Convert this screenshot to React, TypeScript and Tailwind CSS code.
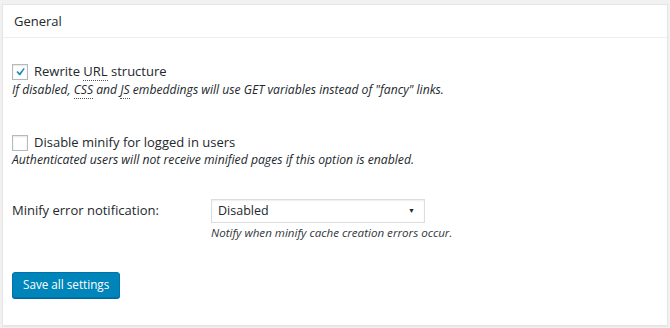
import React from "react";

export default function App() {
  return (
    <div className="w-[670px] h-[328px] bg-[#f1f1f1] pt-[4px] px-[2px] font-['Open_Sans',sans-serif] text-[#23282d]">
      <div className="w-[666px] h-[322px] bg-white border border-[#e5e5e5] shadow-[0_1px_1px_rgba(0,0,0,0.04)]">
        <div className="h-[33px] border-b border-[#eeeeee] pl-[11px] flex items-center text-[13px] leading-none">
          General
        </div>
        <div className="pl-[9px] pt-[25px]">
          <div className="flex items-center h-[18px]">
            <div className="w-[16px] h-[16px] border border-[#b4b9be] bg-white shadow-[inset_0_1px_2px_rgba(0,0,0,0.1)] flex items-center justify-center">
              <svg width="16" height="16" viewBox="0 0 20 20">
                <path d="M15.2 4.4l1.6 1.1-6.3 9.2H8.8L4.9 10.1l1.6-1.4 3 2.9z" fill="#1e8cbe" />
              </svg>
            </div>
            <span className="ml-[6px] text-[13px]">
              Rewrite <span className="border-b border-dotted border-[#555]">URL</span> structure
            </span>
          </div>
          <div className="italic text-[12.15px] h-[16px] leading-[16px] mt-[1px]">
            If disabled, <span className="border-b border-dotted border-[#555]">CSS</span> and{" "}
            <span className="border-b border-dotted border-[#555]">JS</span> embeddings will use GET variables instead of "fancy" links.
          </div>

          <div className="flex items-center h-[18px] mt-[36px]">
            <div className="w-[16px] h-[16px] border border-[#b4b9be] bg-white shadow-[inset_0_1px_2px_rgba(0,0,0,0.1)]" />
            <span className="ml-[6px] text-[13px]">Disable minify for logged in users</span>
          </div>
          <div className="italic text-[12.2px] h-[16px] leading-[16px]">
            Authenticated users will not receive minified pages if this option is enabled.
          </div>

          <div className="flex mt-[31px]">
            <div className="w-[199px] h-[24px] flex items-center text-[13px]">Minify error notification:</div>
            <div>
              <div className="w-[214px] h-[24px] border border-[#dddddd] shadow-[inset_0_1px_2px_rgba(0,0,0,0.07)] flex items-center justify-between pl-[6px] pr-[9px] text-[12.5px]">
                <span>Disabled</span>
                <span className="text-[7px]">▼</span>
              </div>
              <div className="italic text-[11.6px] h-[14px] leading-[14px] mt-[3px] text-[#32373c]">Notify when minify cache creation errors occur.</div>
            </div>
          </div>

          <button className="block mt-[32px] h-[26px] px-[10px] bg-[#0085ba] border border-[#0073aa] rounded-[3px] shadow-[0_1px_0_#006799] text-white text-[11.7px] leading-none">
            Save all settings
          </button>
        </div>
      </div>
    </div>
  );
}
